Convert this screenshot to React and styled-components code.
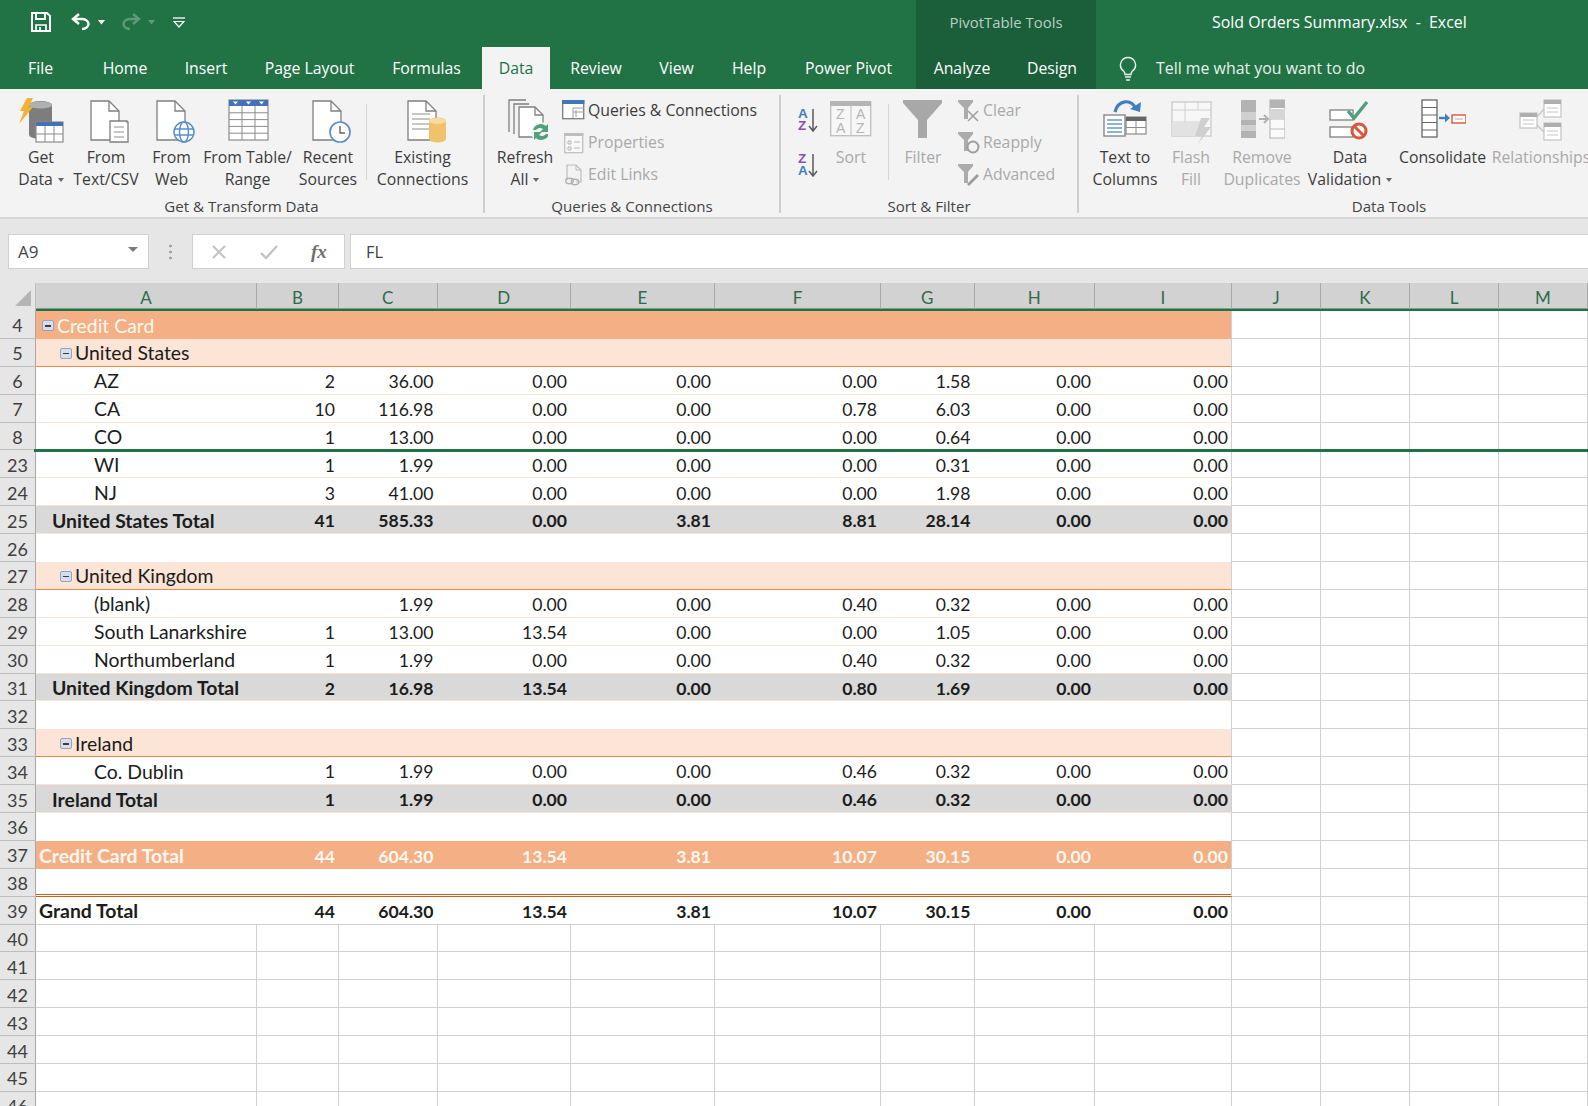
import React from "react";
import styled, { createGlobalStyle } from "styled-components";

const GREEN = "#217346";
const UI_FONT = `"Open Sans", "Noto Sans", sans-serif`;
const CELL_FONT = `Lato, "Noto Sans", sans-serif`;
const GRID = "#d0d0d0";
const DIM = "#a9a9a9";

const Global = createGlobalStyle`
  html, body { margin: 0; padding: 0; background: #fff; overflow: hidden; }
  * { box-sizing: border-box; }
`;

const Page = styled.div`
  width: 1588px;
  height: 1106px;
  overflow: hidden;
  display: flex;
  flex-direction: column;
  font-family: ${UI_FONT};
  background: #e6e6e6;
`;

/* title bar */
const TitleBar = styled.div`
  height: 47px;
  display: flex;
  background: ${GREEN};
  color: #fff;
`;
const Qat = styled.div`
  width: 916px;
  display: flex;
  align-items: center;
  padding: 0 0 3px 31px;
`;
const QatItem = styled.span`
  display: inline-flex;
  margin-left: ${({ $ml }) => $ml || 0}px;
  opacity: ${({ $off }) => ($off ? 0.28 : 1)};
`;
const ContextTitle = styled.div`
  width: 180px;
  background: #1b5e3a;
  color: #b9cfc2;
  display: flex;
  align-items: center;
  justify-content: center;
  font-size: 14.9px;
  padding-bottom: 3px;
`;
const FileTitle = styled.div`
  margin-left: 116px;
  display: flex;
  align-items: center;
  white-space: pre;
  padding-bottom: 3px;
  font-size: 15.9px;
`;

/* tabs */
const TabBar = styled.div`
  height: 42px;
  display: flex;
  background: ${GREEN};
`;
const Tab = styled.div`
  width: ${({ $w }) => $w}px;
  display: flex;
  align-items: center;
  justify-content: center;
  padding-right: ${({ $pr }) => $pr || 0}px;
  font-size: 15.8px;
  color: ${({ $active }) => ($active ? GREEN : "#fff")};
  background: ${({ $active, $context }) => ($active ? "#f3f3f3" : $context ? "#1b5e3a" : "transparent")};
`;
const TellMe = styled.div`
  display: flex;
  align-items: center;
  gap: 19px;
  margin-left: 23px;
  color: #e8f1ec;
  font-size: 15.9px;
`;

/* ribbon */
const Ribbon = styled.div`
  height: 130px;
  flex: none;
  display: flex;
  background: #f3f3f3;
  border-bottom: 2px solid #d6d6d6;
  color: #3c3c3c;
  font-size: 15.8px;
  overflow: hidden;
`;
const Group = styled.div`
  width: ${({ $w }) => $w}px;
  flex: none;
  display: flex;
  flex-direction: column;
`;
const GroupBody = styled.div`
  height: 106px;
  display: flex;
  align-items: flex-start;
  padding-top: 5px;
  padding-left: ${({ $pl }) => $pl || 0}px;
`;
const GroupLabel = styled.div`
  height: 22px;
  line-height: 22px;
  text-align: center;
  font-size: 15.1px;
  color: #444;
`;
const GroupDivider = styled.div`
  width: 2px;
  flex: none;
  margin: 6px 0 4px;
  background: #cfcfcf;
`;
const InnerDivider = styled.div`
  width: 1px;
  height: 76px;
  flex: none;
  margin: 10px ${({ $mr }) => $mr || 0}px 0 ${({ $ml }) => $ml || 0}px;
  background: #d4d4d4;
`;
const BigButton = styled.div`
  width: ${({ $w }) => $w}px;
  flex: none;
  display: flex;
  flex-direction: column;
  align-items: center;
  padding-top: 4px;
  color: ${({ $off }) => ($off ? DIM : "inherit")};
`;
const BigIcon = styled.div`
  height: 48px;
  display: flex;
  justify-content: center;
  padding-top: ${({ $pt }) => $pt || 0}px;
`;
const BigLine = styled.div`
  height: 22px;
  line-height: 22px;
  white-space: nowrap;
  display: flex;
  align-items: center;
  gap: 5px;
`;
const Caret = styled.span`
  width: 0;
  height: 0;
  margin-top: 2px;
  border-left: 3.5px solid transparent;
  border-right: 3.5px solid transparent;
  border-top: 4px solid #666;
`;
const SmallColumn = styled.div`
  display: flex;
  flex-direction: column;
  margin-left: ${({ $ml }) => $ml || 0}px;
`;
const SmallButton = styled.div`
  height: 32px;
  display: flex;
  align-items: center;
  gap: 3px;
  white-space: nowrap;
  color: ${({ $off }) => ($off ? DIM : "inherit")};
`;
const SortStack = styled.div`
  display: flex;
  flex-direction: column;
  gap: 19px;
  padding-top: 13px;
  margin-left: 17px;
  margin-right: 5px;
`;
const SortLetters = styled.text`
  font-family: "Liberation Sans", sans-serif;
  font-weight: 700;
  font-size: 13.5px;
`;

/* formula bar */
const FormulaBar = styled.div`
  height: 64px;
  flex: none;
  display: flex;
  align-items: flex-start;
  padding: 15px 0 0 8px;
  background: #e6e6e6;
`;
const NameBox = styled.div`
  width: 141px;
  height: 35px;
  display: flex;
  align-items: center;
  justify-content: space-between;
  padding: 0 10px 0 9px;
  background: #fff;
  border: 1px solid #d0d0d0;
  color: #444;
  font-size: 17px;
`;
const NameCaret = styled.span`
  width: 0;
  height: 0;
  margin-bottom: 4px;
  border-left: 5px solid transparent;
  border-right: 5px solid transparent;
  border-top: 5px solid #7a7a7a;
`;
const Grip = styled.div`
  width: 3px;
  height: 17px;
  margin: 9px 20px 0 20px;
  background: radial-gradient(circle, #a3a3a3 1.3px, transparent 1.6px) 0 0 / 3px 6px;
`;
const FormulaButtons = styled.div`
  width: 153px;
  height: 35px;
  display: flex;
  align-items: center;
  padding-left: 18px;
  gap: 33px;
  background: #fff;
  border: 1px solid #d0d0d0;
`;
const FxMark = styled.span`
  font-family: "Liberation Serif", serif;
  font-style: italic;
  font-weight: 700;
  font-size: 19px;
  color: #6e6e6e;
`;
const FormulaInput = styled.div`
  flex: 1;
  height: 35px;
  margin-left: 5px;
  padding-left: 15px;
  display: flex;
  align-items: center;
  background: #fff;
  border: 1px solid #d0d0d0;
  border-right: none;
  color: #444;
  font-size: 16.5px;
`;

/* sheet */
const TRACKS = "36px 221px 82px 98.5px 133.5px 144px 166px 93.5px 120.5px 137px 89px 89px 89px 89px";

const Sheet = styled.div`
  flex: 1;
  min-height: 0;
  background: #fff;
  font-family: ${CELL_FONT};
`;
const HeaderRow = styled.div`
  height: 28px;
  display: grid;
  grid-template-columns: ${TRACKS};
  background: #d2d2d2;
  box-shadow: inset 0 -3px 0 -0.5px ${GREEN};
`;
const Corner = styled.div`
  background: #e6e6e6;
  border-right: 1px solid #bdbdbd;
  display: flex;
  align-items: flex-end;
  justify-content: flex-end;
  padding: 0 4px 5px 0;
  &::after {
    content: "";
    border-left: 16px solid transparent;
    border-bottom: 16px solid #b5b5b5;
  }
`;
const ColHead = styled.div`
  height: 25.5px;
  line-height: 25px;
  padding-top: 1.5px;
  text-align: center;
  color: #2f6b4d;
  font-size: 17px;
  border-right: 1px solid #a8a8a8;
`;
const Row = styled.div`
  position: relative;
  height: 27.9px;
  display: grid;
  grid-template-columns: ${TRACKS};
  &::after {
    content: ${({ $split }) => ($split ? '""' : "none")};
    position: absolute;
    z-index: 1;
    left: 34px;
    right: 0;
    bottom: -1.5px;
    height: 3px;
    background: ${GREEN};
  }
`;
const RowHead = styled.div`
  display: flex;
  align-items: center;
  justify-content: center;
  padding-top: 2px;
  background: #e6e6e6;
  color: #3f3f3f;
  font-size: 18px;
  border-right: 1px solid #a8a8a8;
  border-bottom: 1px solid #bdbdbd;
`;

const KIND = {
  card: { bg: "#f4b084", color: "#fff7f0" },
  region: { bg: "#fce4d6", line: "1.5px solid #ec8743" },
  data: { line: "1px solid #fbe3d5" },
  total: { bg: "#d9d9d9", weight: 700, line: "1px solid #fbe3d5" },
  blank: {},
  cardTotal: { bg: "#f4b084", color: "#fff7f0", weight: 700 },
  gap: { line: "3px double #c9601c" },
  grand: { weight: 700, line: `1px solid ${GRID}` },
  empty: { line: `1px solid ${GRID}`, edge: `1px solid ${GRID}` },
};

const Cell = styled.div`
  min-width: 0;
  display: flex;
  align-items: center;
  justify-content: ${({ $num }) => ($num ? "flex-end" : "flex-start")};
  padding: ${({ $num }) => ($num ? 2.5 : 1)}px ${({ $edge }) => ($edge ? 3 : 4)}px 0 ${({ $indent }) => $indent || 0}px;
  white-space: nowrap;
  font-size: ${({ $num }) => ($num ? 17.6 : 19.4)}px;
  background: ${({ $kind }) => KIND[$kind].bg || "#fff"};
  color: ${({ $kind }) => KIND[$kind].color || "#1c1c1c"};
  font-weight: ${({ $kind }) => KIND[$kind].weight || 400};
  border-bottom: ${({ $kind }) => KIND[$kind].line || "none"};
  border-right: ${({ $kind, $edge }) => KIND[$kind].edge || ($edge ? `1px solid ${GRID}` : "none")};
`;
const Expand = styled.span`
  position: relative;
  width: 12px;
  height: 11px;
  margin: 1px 3px 0 0;
  flex: none;
  background: #d5deea;
  border: 1px solid #93a3bb;
  border-radius: 2px;
  &::after {
    content: "";
    position: absolute;
    left: 2px;
    right: 2px;
    top: 4px;
    height: 1.5px;
    background: #3b3b3b;
  }
`;

/* icons */
const S = "#808080";
const Svg = ({ w = 46, h = 46, children }) => (
  <svg width={w} height={h} viewBox={`0 0 ${w} ${h}`} fill="none">{children}</svg>
);
const Sheetlet = ({ x, y, w, h, f = 9, stroke = S }) => (
  <g stroke={stroke} strokeWidth="1.3" fill="#fff">
    <path d={`M${x} ${y}h${w - f}l${f} ${f}v${h - f}h-${w}z`} />
    <path d={`M${x + w - f} ${y}v${f}h${f}`} fill="none" />
  </g>
);
const Lines = ({ x, y, w, n, step = 4, stroke = "#a0a0a0" }) => (
  <g stroke={stroke} strokeWidth="1.2">
    {Array.from({ length: n }, (_, i) => <path key={i} d={`M${x} ${y + i * step}h${w}`} />)}
  </g>
);
const TableMark = ({ x, y, w, h, rows, cols, head = "#4472b8", line = "#8c8c8c", headH = 4 }) => (
  <g>
    <rect x={x} y={y} width={w} height={h} fill="#fff" stroke={line} strokeWidth="1.2" />
    <rect x={x} y={y} width={w} height={headH} fill={head} />
    {Array.from({ length: rows - 1 }, (_, i) => (
      <path key={i} d={`M${x} ${y + headH + ((h - headH) / rows) * (i + 1)}h${w}`} stroke={line} />
    ))}
    {Array.from({ length: cols - 1 }, (_, i) => (
      <path key={i} d={`M${x + (w / cols) * (i + 1)} ${y + headH}V${y + h}`} stroke={line} />
    ))}
  </g>
);

const GetDataIcon = () => (
  <Svg>
    <path d="M11 3a11.5 4 0 0 1 23 0v30a11.5 4 0 0 1-23 0z" transform="translate(0 4)" fill="#7d7d7d" />
    <ellipse cx="22.5" cy="7" rx="11.5" ry="3.6" fill="#b0b0b0" />
    <path d="M9 0h6l-4 9h4L1 26l5-13H2z" fill="#f2b233" />
    <TableMark x={18} y={24} w={27} h={20} rows={2} cols={3} />
  </Svg>
);
const TextCsvIcon = () => (
  <Svg>
    <Sheetlet x={8} y={3} w={28} h={39} f={10} />
    <Sheetlet x={27} y={23} w={18} h={21} f={1} />
    <Lines x={31} y={29} w={10} n={3} step={5} />
  </Svg>
);
const WebIcon = () => (
  <Svg>
    <Sheetlet x={8} y={3} w={28} h={39} f={10} />
    <g stroke="#5b8fc9" strokeWidth="1.5" fill="#fff">
      <circle cx="35" cy="34" r="10" />
      <ellipse cx="35" cy="34" rx="4.5" ry="10" />
      <path d="M25.5 31h19M25.5 37h19" />
    </g>
  </Svg>
);
const TableIcon = () => (
  <Svg>
    <TableMark x={4} y={2} w={39} h={40} rows={5} cols={3} headH={6} />
    <path d="M8 3.5h5l-2.5 3zM21 3.5h5l-2.5 3zM34 3.5h5l-2.5 3z" fill="#fff" />
  </Svg>
);
const RecentIcon = () => (
  <Svg>
    <Sheetlet x={8} y={3} w={28} h={39} f={10} />
    <circle cx="35" cy="34" r="10" fill="#fff" stroke="#5b8fc9" strokeWidth="1.7" />
    <path d="M35 28v7h5" stroke="#666" strokeWidth="1.4" />
  </Svg>
);
const ExistingIcon = () => (
  <Svg>
    <Sheetlet x={8} y={3} w={28} h={39} f={10} />
    <Lines x={12} y={16} w={18} n={4} step={5} />
    <path d="M29 23a8.5 3.5 0 0 1 17 0v18a8.5 3.5 0 0 1-17 0z" fill="#efc26b" />
    <ellipse cx="37.5" cy="23" rx="8.5" ry="3" fill="#f6dca3" />
  </Svg>
);
const RefreshIcon = () => (
  <Svg>
    <path d="M7 34V2h17M12 36V6h15" stroke={S} strokeWidth="1.3" />
    <Sheetlet x={17} y={9} w={24} h={30} f={8} />
    <circle cx="39" cy="34" r="10" fill="#f3f3f3" />
    <path d="M31 32a8 8 0 0 1 13-4l2-2v8h-8l3-3a5 5 0 0 0-7 1zM47 36a8 8 0 0 1-13 4l-2 2v-8h8l-3 3a5 5 0 0 0 7-1z" fill="#4fa17c" />
  </Svg>
);
const TextColumnsIcon = () => (
  <Svg>
    <path d="M13 14c3-12 16-14 21-3" stroke="#3f7fbf" strokeWidth="3.2" />
    <path d="M28 11l10 3 1-10z" fill="#3f7fbf" />
    <rect x="2" y="17" width="21" height="21" fill="#fff" stroke={S} strokeWidth="1.3" />
    <Lines x={5} y={22} w={15} n={4} stroke="#3f7fbf" />
    <TableMark x={24} y={19} w={20} h={17} rows={2} cols={2} head="#666" />
  </Svg>
);
const FlashIcon = () => (
  <Svg>
    <rect x="4" y="4" width="39" height="34" fill="#f7f7f7" stroke="#c6c6c6" strokeWidth="1.2" />
    <path d="M4 12h39M4 24h34M4 31h30M17 4v27M30 4v8" stroke="#d0d0d0" />
    <rect x="4" y="24" width="30" height="14" fill="#e2e2e2" />
    <path d="M42 20h-9l-6 18h7l-4 8 13-17h-7z" fill="#cfcfcf" />
  </Svg>
);
const RemoveDuplicatesIcon = () => (
  <Svg>
    <rect x="2" y="2" width="15" height="38" fill="#b3b3b3" />
    <path d="M2 14h15v8H2zM2 27h15v6H2z" fill="#d0d0d0" />
    <path d="M20 21h8M25 17l4 4-4 4" stroke="#b0b0b0" strokeWidth="2" />
    <rect x="31" y="2" width="15" height="38" fill="#fafafa" stroke="#bcbcbc" strokeWidth="1.2" />
    <rect x="31" y="2" width="15" height="8" fill="#b3b3b3" />
    <path d="M31 21h15M31 31h15" stroke="#bcbcbc" />
    <rect x="31" y="11" width="15" height="10" fill="#d6d6d6" />
  </Svg>
);
const ValidationIcon = () => (
  <Svg>
    <rect x="3" y="12" width="23" height="10" fill="#fff" stroke={S} strokeWidth="1.3" />
    <rect x="3" y="29" width="23" height="10" fill="#fff" stroke={S} strokeWidth="1.3" />
    <path d="M21 13l6 7 13-16" stroke="#4fa17c" strokeWidth="3.4" />
    <circle cx="32" cy="33" r="7" fill="#fff" stroke="#d8573a" strokeWidth="3" />
    <path d="M27 28l10 10" stroke="#d8573a" strokeWidth="3" />
  </Svg>
);
const ConsolidateIcon = () => (
  <Svg>
    <rect x="2" y="2" width="15" height="37" fill="#fff" stroke="#666" strokeWidth="1.3" />
    <path d="M2 9.5h15M2 17h15M2 24.5h15M2 32h15" stroke="#666" />
    <path d="M19 20h9" stroke="#3f7fbf" strokeWidth="2.4" />
    <path d="M25 15.500l5 4.500-5 4.500z" fill="#3f7fbf" />
    <rect x="32" y="17" width="14" height="8" fill="#fff" stroke="#d8573a" strokeWidth="1.4" />
    <path d="M35 21h8" stroke="#d8a090" />
  </Svg>
);
const RelationshipsIcon = () => (
  <Svg>
    <path d="M18 20l8-9M18 26l8 8" stroke="#c4c4c4" strokeWidth="1.2" />
    <TableMark x={2} y={15} w={17} h={15} rows={1} cols={1} head="#aeaeae" line="#c4c4c4" />
    <TableMark x={26} y={2} w={17} h={17} rows={1} cols={1} head="#aeaeae" line="#c4c4c4" />
    <TableMark x={26} y={25} w={17} h={17} rows={1} cols={1} head="#aeaeae" line="#c4c4c4" />
    <Lines x={5} y={22} w={11} n={2} stroke="#cfcfcf" />
    <Lines x={29} y={10} w={11} n={2} stroke="#cfcfcf" />
    <Lines x={29} y={33} w={11} n={2} stroke="#cfcfcf" />
  </Svg>
);
const AzIcon = ({ top, bottom, topColor, bottomColor }) => (
  <Svg w={22} h={26}>
    <SortLetters x="0" y="11" fill={topColor}>{top}</SortLetters>
    <SortLetters x="0" y="23" fill={bottomColor}>{bottom}</SortLetters>
    <path d="M15 2v21M11 19l4 5 4-5" stroke="#5a5a5a" strokeWidth="1.5" />
  </Svg>
);
const SortBoxIcon = () => (
  <Svg w={42} h={36}>
    <rect x="0.7" y="0.7" width="40" height="34" fill="#f7f7f7" stroke="#bdbdbd" strokeWidth="1.3" />
    <rect x="0" y="0" width="41" height="5" fill="#b5b5b5" />
    <path d="M21 5v30" stroke="#bdbdbd" />
    <text x="6" y="18" fontFamily="Liberation Sans, sans-serif" fontSize="14" fill="#b5b5b5">Z</text>
    <text x="6" y="32" fontFamily="Liberation Sans, sans-serif" fontSize="14" fill="#b5b5b5">A</text>
    <text x="26" y="18" fontFamily="Liberation Sans, sans-serif" fontSize="14" fill="#b5b5b5">A</text>
    <text x="26" y="32" fontFamily="Liberation Sans, sans-serif" fontSize="14" fill="#b5b5b5">Z</text>
  </Svg>
);
const FunnelIcon = () => (
  <Svg w={40} h={40}>
    <path d="M0 0h39v3L24 20v18h-9V20L0 3z" fill="#a8a8a8" />
  </Svg>
);
const SmallFunnel = () => <path d="M1 1h15v2l-5 6v11H7V9L1 3z" fill="#ababab" />;
const ClearIcon = () => (
  <Svg w={23} h={23}>
    <SmallFunnel />
    <path d="M11 12l10 10M21 12L11 22" stroke="#9d9d9d" strokeWidth="1.5" />
  </Svg>
);
const ReapplyIcon = () => (
  <Svg w={23} h={23}>
    <SmallFunnel />
    <circle cx="16" cy="16" r="5.500" stroke="#9d9d9d" strokeWidth="2" fill="#f3f3f3" />
  </Svg>
);
const AdvancedIcon = () => (
  <Svg w={23} h={23}>
    <SmallFunnel />
    <path d="M10 21l10-10 2 2-10 10z" fill="#9d9d9d" />
  </Svg>
);
const QueriesIcon = () => (
  <Svg w={23} h={23}>
    <rect x="0.700" y="1.700" width="21" height="18" fill="#fff" stroke="#7b7b7b" strokeWidth="1.3" />
    <rect x="0" y="1" width="22.400" height="4" fill="#3f78b5" />
    <path d="M11 9h11M11 13h11M11 9v10M14 11v7" stroke="#9c9c9c" />
  </Svg>
);
const PropertiesIcon = () => (
  <Svg w={23} h={23}>
    <rect x="2.700" y="2.700" width="18" height="19" fill="#f8f8f8" stroke="#c0c0c0" strokeWidth="1.3" />
    <rect x="2" y="2" width="19.400" height="3" fill="#bdbdbd" />
    <path d="M6 10h3v3H6zM6 16h3v3H6zM12 11h6M12 17h6" stroke="#b4b4b4" />
  </Svg>
);
const EditLinksIcon = () => (
  <Svg w={23} h={23}>
    <path d="M5 17V2h9l5 5v12h-5" stroke="#bdbdbd" strokeWidth="1.2" />
    <path d="M14 2v5h5" stroke="#bdbdbd" />
    <ellipse cx="7.500" cy="18" rx="3.800" ry="2.700" stroke="#b0b0b0" strokeWidth="1.400" />
    <ellipse cx="13" cy="19" rx="3.800" ry="2.700" stroke="#b0b0b0" strokeWidth="1.400" />
  </Svg>
);
const SaveIcon = () => (
  <Svg w={20} h={20}>
    <path d="M1 1h15l3 3v15H1z" stroke="#fff" strokeWidth="2" />
    <path d="M5 1v6h9V1" stroke="#fff" strokeWidth="2" />
    <path d="M5 19v-6h10v6M9 15v4" stroke="#fff" strokeWidth="1.700" />
  </Svg>
);
const UndoIcon = ({ flip }) => (
  <svg width="20" height="18" viewBox="0 0 20 18" fill="none" style={flip ? { transform: "scaleX(-1)" } : undefined}>
    <path d="M8 1L2 6l6 5" stroke="#fff" strokeWidth="2.400" />
    <path d="M3 6h8c4 0 6.500 2.500 6.500 5S15 16 11 16" stroke="#fff" strokeWidth="2.400" />
  </svg>
);
const QatCaret = () => (
  <Svg w={7} h={5}><path d="M0 0h7L3.500 4.500z" fill="#fff" /></Svg>
);
const CustomizeIcon = () => (
  <Svg w={12} h={11}>
    <path d="M0 1h12" stroke="#fff" strokeWidth="1.300" />
    <path d="M1 4.500h10L6 10z" stroke="#fff" strokeWidth="1.200" />
  </Svg>
);
const BulbIcon = () => (
  <Svg w={18} h={25}>
    <path d="M9 1.500a7.500 7.500 0 0 0-4.500 13.500c1 1 1.500 2 1.500 3.500h6c0-1.500.5-2.500 1.500-3.500A7.500 7.500 0 0 0 9 1.500z" stroke="#e8f1ec" strokeWidth="1.400" />
    <path d="M6 21h6M7 24h4" stroke="#e8f1ec" strokeWidth="1.400" />
  </Svg>
);
const CrossIcon = () => (
  <Svg w={16} h={16}><path d="M2 2l12 12M14 2L2 14" stroke="#c4c4c4" strokeWidth="2.200" /></Svg>
);
const CheckIcon = () => (
  <Svg w={18} h={16}><path d="M1 9l5 5L17 2" stroke="#c4c4c4" strokeWidth="2.400" /></Svg>
);

/* data */
const TABS = [
  ["File", 81], ["Home", 88], ["Insert", 74], ["Page Layout", 133], ["Formulas", 106, false, 5],
  ["Data", 68, true], ["Review", 92], ["View", 69], ["Help", 76], ["Power Pivot", 129, false, 6],
];
const COLUMNS = ["A", "B", "C", "D", "E", "F", "G", "H", "I", "J", "K", "L", "M"];
const Z = "0.00";

const ROWS = [
  { n: 4, kind: "card", label: "Credit Card", indent: 6, toggle: true },
  { n: 5, kind: "region", label: "United States", indent: 24, toggle: true },
  { n: 6, kind: "data", label: "AZ", indent: 58, vals: ["2", "36.00", Z, Z, Z, "1.58", Z, Z] },
  { n: 7, kind: "data", label: "CA", indent: 58, vals: ["10", "116.98", Z, Z, "0.78", "6.03", Z, Z] },
  { n: 8, kind: "data", label: "CO", indent: 58, vals: ["1", "13.00", Z, Z, Z, "0.64", Z, Z], split: true },
  { n: 23, kind: "data", label: "WI", indent: 58, vals: ["1", "1.99", Z, Z, Z, "0.31", Z, Z] },
  { n: 24, kind: "data", label: "NJ", indent: 58, vals: ["3", "41.00", Z, Z, Z, "1.98", Z, Z] },
  { n: 25, kind: "total", label: "United States Total", indent: 16, vals: ["41", "585.33", Z, "3.81", "8.81", "28.14", Z, Z] },
  { n: 26, kind: "blank" },
  { n: 27, kind: "region", label: "United Kingdom", indent: 24, toggle: true },
  { n: 28, kind: "data", label: "(blank)", indent: 58, vals: ["", "1.99", Z, Z, "0.40", "0.32", Z, Z] },
  { n: 29, kind: "data", label: "South Lanarkshire", indent: 58, vals: ["1", "13.00", "13.54", Z, Z, "1.05", Z, Z] },
  { n: 30, kind: "data", label: "Northumberland", indent: 58, vals: ["1", "1.99", Z, Z, "0.40", "0.32", Z, Z] },
  { n: 31, kind: "total", label: "United Kingdom Total", indent: 16, vals: ["2", "16.98", "13.54", Z, "0.80", "1.69", Z, Z] },
  { n: 32, kind: "blank" },
  { n: 33, kind: "region", label: "Ireland", indent: 24, toggle: true },
  { n: 34, kind: "data", label: "Co. Dublin", indent: 58, vals: ["1", "1.99", Z, Z, "0.46", "0.32", Z, Z] },
  { n: 35, kind: "total", label: "Ireland Total", indent: 16, vals: ["1", "1.99", Z, Z, "0.46", "0.32", Z, Z] },
  { n: 36, kind: "blank" },
  { n: 37, kind: "cardTotal", label: "Credit Card Total", indent: 3, vals: ["44", "604.30", "13.54", "3.81", "10.07", "30.15", Z, Z] },
  { n: 38, kind: "gap" },
  { n: 39, kind: "grand", label: "Grand Total", indent: 3, vals: ["44", "604.30", "13.54", "3.81", "10.07", "30.15", Z, Z] },
  ...[40, 41, 42, 43, 44, 45, 46].map((n) => ({ n, kind: "empty" })),
];

const Big = ({ w, icon, lines, off, caret, iconTop }) => (
  <BigButton $w={w} $off={off}>
    <BigIcon $pt={iconTop}>{icon}</BigIcon>
    {lines.map((line, i) => (
      <BigLine key={line}>
        {line}
        {caret && i === lines.length - 1 && <Caret />}
      </BigLine>
    ))}
  </BigButton>
);

const Small = ({ icon, label, off }) => (
  <SmallButton $off={off}>
    {icon}
    {label}
  </SmallButton>
);

const SheetRow = ({ row }) => {
  const { n, kind, label, indent, toggle, vals = [], split } = row;
  return (
    <Row $split={split}>
      <RowHead>{n}</RowHead>
      <Cell $kind={kind} $indent={indent}>
        {toggle && <Expand />}
        {label}
      </Cell>
      {Array.from({ length: 8 }, (_, i) => (
        <Cell key={i} $kind={kind} $num $edge={i === 7}>{vals[i]}</Cell>
      ))}
      {[0, 1, 2, 3].map((i) => <Cell key={i} $kind="empty" />)}
    </Row>
  );
};

export default function App() {
  return (
    <Page>
      <Global />
      <TitleBar>
        <Qat>
          <QatItem><SaveIcon /></QatItem>
          <QatItem $ml={20}><UndoIcon /></QatItem>
          <QatItem $ml={7}><QatCaret /></QatItem>
          <QatItem $ml={16} $off><UndoIcon flip /></QatItem>
          <QatItem $ml={7} $off><QatCaret /></QatItem>
          <QatItem $ml={18}><CustomizeIcon /></QatItem>
        </Qat>
        <ContextTitle>PivotTable Tools</ContextTitle>
        <FileTitle>Sold Orders Summary.xlsx  -  Excel</FileTitle>
      </TitleBar>

      <TabBar>
        {TABS.map(([name, w, active, pr]) => (
          <Tab key={name} $w={w} $active={active} $pr={pr}>{name}</Tab>
        ))}
        <Tab $w={92} $context>Analyze</Tab>
        <Tab $w={88} $context>Design</Tab>
        <TellMe>
          <BulbIcon />
          Tell me what you want to do
        </TellMe>
      </TabBar>

      <Ribbon>
        <Group $w={483}>
          <GroupBody $pl={8}>
            <Big w={66} icon={<GetDataIcon />} lines={["Get", "Data"]} caret />
            <Big w={64} icon={<TextCsvIcon />} lines={["From", "Text/CSV"]} />
            <Big w={67} icon={<WebIcon />} lines={["From", "Web"]} />
            <Big w={85} icon={<TableIcon />} lines={["From Table/", "Range"]} />
            <Big w={76} icon={<RecentIcon />} lines={["Recent", "Sources"]} />
            <InnerDivider />
            <Big w={111} icon={<ExistingIcon />} lines={["Existing", "Connections"]} />
          </GroupBody>
          <GroupLabel>Get &amp; Transform Data</GroupLabel>
        </Group>
        <GroupDivider />

        <Group $w={294}>
          <GroupBody $pl={2}>
            <Big w={76} icon={<RefreshIcon />} lines={["Refresh", "All"]} caret />
            <SmallColumn $ml={-1}>
              <Small icon={<QueriesIcon />} label="Queries & Connections" />
              <Small icon={<PropertiesIcon />} label="Properties" off />
              <Small icon={<EditLinksIcon />} label="Edit Links" off />
            </SmallColumn>
          </GroupBody>
          <GroupLabel>Queries &amp; Connections</GroupLabel>
        </Group>
        <GroupDivider />

        <Group $w={296}>
          <GroupBody>
            <SortStack>
              <AzIcon top="A" bottom="Z" topColor="#3f7fbf" bottomColor="#8a4fb5" />
              <AzIcon top="Z" bottom="A" topColor="#8a4fb5" bottomColor="#3f7fbf" />
            </SortStack>
            <Big w={52} icon={<SortBoxIcon />} lines={["Sort"]} off iconTop={3} />
            <InnerDivider $ml={11} $mr={10} />
            <Big w={48} icon={<FunnelIcon />} lines={["Filter"]} off iconTop={2} />
            <SmallColumn $ml={10}>
              <Small icon={<ClearIcon />} label="Clear" off />
              <Small icon={<ReapplyIcon />} label="Reapply" off />
              <Small icon={<AdvancedIcon />} label="Advanced" off />
            </SmallColumn>
          </GroupBody>
          <GroupLabel>Sort &amp; Filter</GroupLabel>
        </Group>
        <GroupDivider />

        <Group $w={620}>
          <GroupBody $pl={6}>
            <Big w={80} icon={<TextColumnsIcon />} lines={["Text to", "Columns"]} />
            <Big w={52} icon={<FlashIcon />} lines={["Flash", "Fill"]} off />
            <Big w={90} icon={<RemoveDuplicatesIcon />} lines={["Remove", "Duplicates"]} off />
            <Big w={86} icon={<ValidationIcon />} lines={["Data", "Validation"]} caret />
            <Big w={99} icon={<ConsolidateIcon />} lines={["Consolidate"]} />
            <Big w={98} icon={<RelationshipsIcon />} lines={["Relationships"]} off />
          </GroupBody>
          <GroupLabel>Data Tools</GroupLabel>
        </Group>
      </Ribbon>

      <FormulaBar>
        <NameBox>A9<NameCaret /></NameBox>
        <Grip />
        <FormulaButtons>
          <CrossIcon />
          <CheckIcon />
          <FxMark>fx</FxMark>
        </FormulaButtons>
        <FormulaInput>FL</FormulaInput>
      </FormulaBar>

      <Sheet>
        <HeaderRow>
          <Corner />
          {COLUMNS.map((c) => <ColHead key={c}>{c}</ColHead>)}
        </HeaderRow>
        {ROWS.map((row) => <SheetRow key={row.n} row={row} />)}
      </Sheet>
    </Page>
  );
}
